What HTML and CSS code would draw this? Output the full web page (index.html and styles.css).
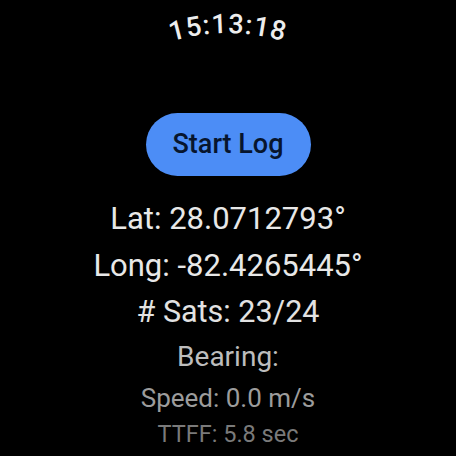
FILE: index.html
```html
<!DOCTYPE html>
<html>
<head>
<meta charset="utf-8">
<link rel="stylesheet" href="styles.css">
</head>
<body>
<div class="screen">
  <svg class="time" width="456" height="50" viewBox="0 0 456 50">
    <defs>
      <path id="arc" d="M 32 229 A 196 196 0 0 1 424 229"/>
    </defs>
    <text class="time-text"><textPath href="#arc" startOffset="50%" text-anchor="middle">15:13:18</textPath></text>
  </svg>
  <div class="btn">Start Log</div>
  <div class="list">
    <div class="row r1">Lat: 28.0712793°</div>
    <div class="row r2">Long: -82.4265445°</div>
    <div class="row r3"># Sats: 23/24</div>
    <div class="row r4">Bearing:</div>
    <div class="row r5">Speed: 0.0 m/s</div>
    <div class="row r6">TTFF: 5.8 sec</div>
  </div>
</div>
</body>
</html>
```
FILE: styles.css
```css
html, body {
  margin: 0;
  padding: 0;
  background: #000;
}
body {
  width: 456px;
  height: 456px;
  overflow: hidden;
  font-family: Roboto, "Liberation Sans", sans-serif;
}
.screen {
  display: flex;
  flex-direction: column;
  align-items: center;
  width: 456px;
  height: 456px;
}
.time {
  display: block;
  flex: none;
}
.time-text {
  font-family: Roboto, sans-serif;
  font-size: 27px;
  font-weight: 500;
  letter-spacing: 1px;
  fill: #ededed;
}
.btn {
  margin-top: 63px;
  width: 165px;
  height: 63px;
  border-radius: 32px;
  background: #4c8df6;
  color: #07152e;
  font-size: 27px;
  font-weight: 500;
  line-height: 63px;
  text-align: center;
  flex: none;
}
.list {
  margin-top: 20px;
  display: flex;
  flex-direction: column;
  align-items: center;
}
.row {
  white-space: nowrap;
  text-align: center;
}
.r1 { font-size: 31px; line-height: 46px; color: #e8e8e8; }
.r2 { font-size: 31px; line-height: 47px; color: #e8e8e8; }
.r3 { font-size: 30.5px; line-height: 46px; color: #e2e2e2; }
.r4 { font-size: 28px; line-height: 43px; color: #bdbdbd; }
.r5 { font-size: 26px; line-height: 41px; color: #9c9c9c; }
.r6 { font-size: 23.5px; line-height: 31px; color: #7a7a7a; }
```
